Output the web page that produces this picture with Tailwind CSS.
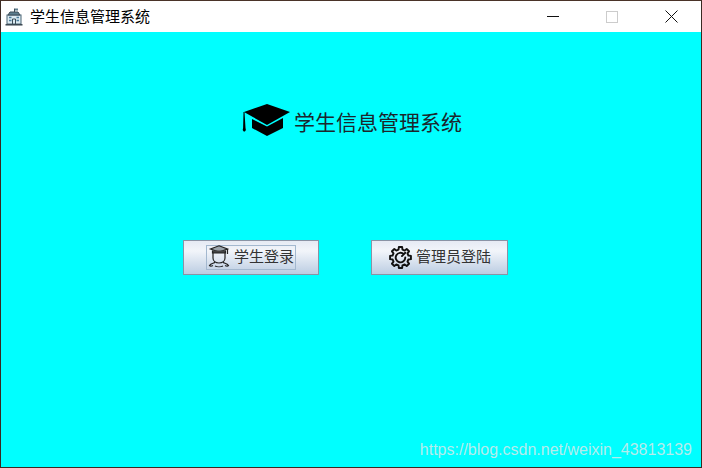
<!DOCTYPE html>
<html lang="en">
<head>
    <meta charset="UTF-8">
    <title>学生信息管理系统</title>
    <script src="https://cdn.jsdelivr.net/npm/@tailwindcss/browser@4"></script>
</head>
<body class="overflow-hidden">
    <div class="relative w-[702px] h-[468px] flex flex-col border border-[#3a2a22] border-t-[#4a3328] font-['Noto_Sans_CJK_SC',sans-serif]">
        <!-- Title bar -->
        <div class="flex items-center h-[31px] bg-white shrink-0">
            <svg class="ml-[4px] w-[18px] h-[18px]" viewBox="0 0 18 18" fill="none">
                <path d="M9.500 .5v3.500" stroke="#3c4d58"/>
                <path d="M10 .5h3v2h-3z" fill="#5d7f8f"/>
                <rect x="2" y="7" width="14" height="9" fill="#dcebf2" stroke="#4a6474"/>
                <path d="M3 7l2-3h8l2 3z" fill="#5d7f8f" stroke="#3c4d58"/>
                <path d="M4 9.500h2.500M11.500 9.500h2.500M4 12.500h2.500M11.500 12.500h2.500" stroke="#4d7f9f" stroke-width="1.500"/>
                <path d="M7.500 16v-5h3v5" stroke="#3c4d58"/>
                <path d="M.5 16.800h17" stroke="#2f3d47" stroke-width="1.400"/>
            </svg>
            <span class="ml-[7px] -mt-[2px] text-[15px] leading-none text-black">学生信息管理系统</span>
            <div class="ml-auto flex items-center">
                <svg class="w-[12px] h-[12px] mr-[47px]" viewBox="0 0 12 12"><path d="M0 5.500h12" stroke="#111" stroke-width="1"/></svg>
                <svg class="w-[12px] h-[12px] mr-[47px]" viewBox="0 0 12 12"><rect x="0.500" y="0.500" width="11" height="11" fill="none" stroke="#ccc"/></svg>
                <svg class="w-[13px] h-[13px] mr-[23px]" viewBox="0 0 13 13"><path d="M0.500 0.500l12 12M12.500 0.500l-12 12" stroke="#111" stroke-width="1"/></svg>
            </div>
        </div>

        <!-- Content -->
        <div class="flex-1 bg-[#00ffff] flex flex-col">
            <div class="flex items-center ml-[241px] mt-[71px] h-[34px]">
                <svg class="w-[48px] h-[34px] shrink-0" viewBox="0 0 48 34">
                    <path d="M25 1L48 9 25 22 2 9z" fill="#000"/>
                    <path d="M10 16L25 23.500 41 15v10L25 33 10 25z" fill="#000"/>
                    <path d="M1.500 9h1l1 16 .4 2-1 1.500h-1.200l-1-1.500.4-2z" fill="#000"/>
                </svg>
                <span class="ml-[4px] mt-[2px] text-[21px] leading-none text-[#1c262c]">学生信息管理系统</span>
            </div>

            <div class="flex ml-[182px] mt-[103px] gap-[52px]">
                <button class="flex items-center w-[136px] h-[35px] border border-[#8a93a5] bg-gradient-to-b from-[#e6eaf4] via-[#f2f5fa] via-30% to-[#bccde2]">
                    <span class="ml-[22px] flex items-center w-[90px] h-[25px] border border-[#a3b8cf]">
                        <svg class="w-[26px] h-[26px] shrink-0" viewBox="0 0 26 26" fill="none" stroke="#222" stroke-width="1.200">
                            <path d="M12 .8L20.500 4 12 7 3.500 4z" fill="#9aa3ab"/>
                            <path d="M5.500 5.500v2.500h13V5.500" fill="#444"/>
                            <path d="M20.500 4v5"/>
                            <path d="M6 8v5c0 3 2.500 5 6 5s6-2 6-5V8"/>
                            <path d="M8 17c-.5 1.500-4 1-5.500 3.500 1 1 2.500.5 3.500 0M16 17c.5 1.500 4 1 5.500 3.500-1 1-2.500.5-3.500 0M8 21c2 1 6 1 8 0"/>
                        </svg>
                        <span class="ml-[1px] -mt-[4px] text-[15px] leading-none text-[#333] whitespace-nowrap">学生登录</span>
                    </span>
                </button>
                <button class="flex items-center w-[137px] h-[35px] border border-[#8a93a5] bg-gradient-to-b from-[#e6eaf4] via-[#f2f5fa] via-30% to-[#bccde2]">
                    <svg class="ml-[17px] w-[23px] h-[23px] shrink-0" viewBox="0 0 24 24" fill="none" stroke="#111" stroke-width="2" stroke-linejoin="round" stroke-linecap="round">
                        <path d="M9.940 3.750L10.280 1.130H13.720L14.060 3.750L16.380 4.710L18.470 3.100L20.900 5.530L19.290 7.620L20.250 9.940L22.870 10.280V13.720L20.250 14.060L19.290 16.380L20.900 18.470L18.470 20.900L16.380 19.290L14.060 20.250L13.720 22.870H10.280L9.940 20.250L7.620 19.290L5.530 20.900L3.100 18.470L4.710 16.380L3.750 14.060L1.130 13.720V10.280L3.750 9.940L4.710 7.620L3.100 5.530L5.530 3.100L7.620 4.710Z"/>
                        <path d="M15.500 8.500A5 5 0 1 0 17 12M17 7l-3.500 3.500"/>
                    </svg>
                    <span class="ml-[4px] -mt-[4px] text-[15px] leading-none text-[#333] whitespace-nowrap">管理员登陆</span>
                </button>
            </div>
        </div>

        <!-- Watermark over the window -->
        <span class="absolute right-[9px] bottom-[9px] text-[16px] leading-none text-[#b5ecec] font-['Liberation_Sans',sans-serif]">https://blog.csdn.net/weixin_43813139</span>
    </div>
</body>
</html>
